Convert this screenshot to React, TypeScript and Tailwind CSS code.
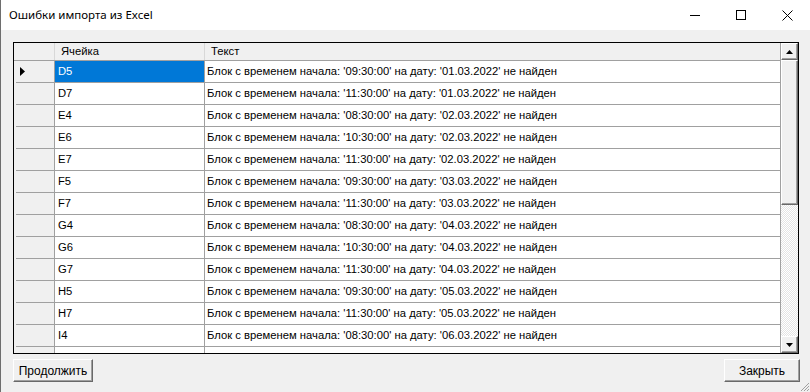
import React from "react";

const rows: [string, string, string][] = [
  ["D5", "09:30:00", "01.03.2022"],
  ["D7", "11:30:00", "01.03.2022"],
  ["E4", "08:30:00", "02.03.2022"],
  ["E6", "10:30:00", "02.03.2022"],
  ["E7", "11:30:00", "02.03.2022"],
  ["F5", "09:30:00", "03.03.2022"],
  ["F7", "11:30:00", "03.03.2022"],
  ["G4", "08:30:00", "04.03.2022"],
  ["G6", "10:30:00", "04.03.2022"],
  ["G7", "11:30:00", "04.03.2022"],
  ["H5", "09:30:00", "05.03.2022"],
  ["H7", "11:30:00", "05.03.2022"],
  ["I4", "08:30:00", "06.03.2022"],
  ["", "", ""],
];

function ClassicBtn({ children, className }: { children: React.ReactNode; className?: string }) {
  return (
    <div
      className={
        "flex items-center justify-center bg-[#f0f0f0] border-t border-l border-t-white border-l-white border-b border-r border-b-[#696969] border-r-[#696969] shadow-[inset_-1px_-1px_0_#a0a0a0] " +
        (className ?? "")
      }
    >
      {children}
    </div>
  );
}

function Arrow({ up }: { up: boolean }) {
  return (
    <svg width="7" height="4" viewBox="0 0 7 4">
      {up ? <polygon points="0,4 7,4 3.5,0" fill="#000" /> : <polygon points="0,0 7,0 3.5,4" fill="#000" />}
    </svg>
  );
}

export default function App() {
  return (
    <div
      className="w-[810px] h-[392px] bg-[#f0f0f0] flex flex-col overflow-hidden border-l border-l-[#6e6e6e]"
      style={{ fontFamily: '"Liberation Sans", Arial, sans-serif' }}
    >
      {/* Title bar */}
      <div className="h-[30px] bg-white flex items-center shrink-0">
        <div
          className="pl-[8px] text-[11.5px] text-black flex-1 leading-none"
          style={{ fontFamily: '"Noto Sans", sans-serif' }}
        >
          Ошибки импорта из Excel
        </div>
        <div className="w-[46px] h-[30px] flex items-center justify-center">
          <div className="w-[10px] h-px bg-black" />
        </div>
        <div className="w-[46px] h-[30px] flex items-center justify-center">
          <div className="w-[10px] h-[10px] border border-black" />
        </div>
        <div className="w-[46px] h-[30px] flex items-center justify-center">
          <svg width="11" height="11" viewBox="0 0 11 11">
            <path d="M0.5 0.5 L10.5 10.5 M10.5 0.5 L0.5 10.5" stroke="#000" strokeWidth="1" />
          </svg>
        </div>
      </div>

      {/* Client */}
      <div className="flex-1 flex flex-col pl-[12px] pr-[11px] pt-[12px] relative">
        {/* Grid */}
        <div className="w-[786px] h-[312px] border border-black bg-white flex overflow-hidden">
          <div className="flex-1 flex flex-col overflow-hidden">
            {/* Header */}
            <div className="h-[18px] flex shrink-0 bg-[#f0f0f0] border-b border-b-[#a0a0a0] text-[11.25px] text-black">
              <div className="w-[41px] border-r border-r-[#d8d8d8]" />
              <div className="w-[150px] border-r border-r-[#d8d8d8] pl-[6px] flex items-center">Ячейка</div>
              <div className="flex-1 pl-[6px] flex items-center">Текст</div>
            </div>
            {rows.map(([cell, time, date], i) => (
              <div key={i} className="h-[22px] flex shrink-0 text-[11.25px] text-black">
                <div className="w-[41px] bg-[#f0f0f0] border-r border-r-[#a0a0a0] flex flex-col">
                  <div className="flex-1 flex items-center pl-[6px]">
                    {i === 0 && (
                      <svg width="5" height="9" viewBox="0 0 5 9">
                        <polygon points="0,0 5,4.5 0,9" fill="#000" />
                      </svg>
                    )}
                  </div>
                  <div className="h-px ml-[2px] bg-[#a0a0a0]" />
                </div>
                <div
                  className={
                    "w-[150px] border-r border-r-[#a0a0a0] border-b border-b-[#a0a0a0] pl-[3px] flex items-center " +
                    (i === 0 ? "bg-[#0078d7] text-white" : "")
                  }
                >
                  {cell}
                </div>
                <div className="flex-1 border-b border-b-[#a0a0a0] pl-[2px] flex items-center whitespace-nowrap">
                  {cell && (
                    <span>
                      Блок с временем начала: '{time}' на дату: '{date}' не найден
                    </span>
                  )}
                </div>
              </div>
            ))}
          </div>
          {/* Scrollbar */}
          <div className="w-[18px] flex flex-col border-l border-l-[#a0a0a0] bg-[#f0f0f0]">
            <ClassicBtn className="h-[17px] shrink-0">
              <Arrow up />
            </ClassicBtn>
            <ClassicBtn className="h-[145px] shrink-0">{null}</ClassicBtn>
            <div className="flex-1 bg-[repeating-conic-gradient(#e4e4e4_0_25%,#ffffff_0_50%)] bg-[length:2px_2px]" />
            <ClassicBtn className="h-[17px] shrink-0">
              <Arrow up={false} />
            </ClassicBtn>
          </div>
        </div>

        {/* Buttons */}
        <div className="flex justify-between mt-[5px] w-[787px] text-[12px] text-black">
          <ClassicBtn className="w-[80px] h-[23px]">Продолжить</ClassicBtn>
          <ClassicBtn className="w-[76px] h-[23px]">Закрыть</ClassicBtn>
        </div>

        {/* Resize grip */}
        <svg className="absolute right-0 bottom-0" width="11" height="11" viewBox="0 0 11 11">
          <path d="M10 2 L2 10 M10 5 L5 10 M10 8 L8 10" stroke="#a0a0a0" strokeWidth="1" />
        </svg>
      </div>
    </div>
  );
}
